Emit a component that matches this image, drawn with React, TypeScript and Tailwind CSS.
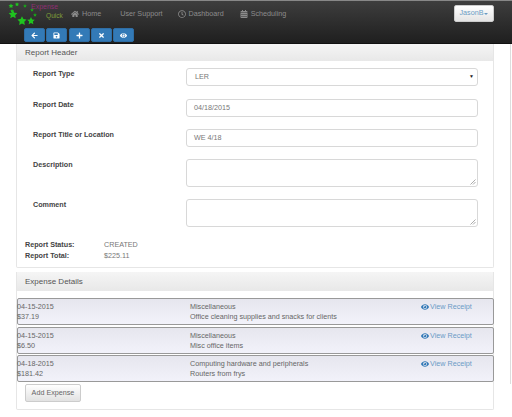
import React from "react";
import { FaHome, FaRegClock, FaCalendarAlt, FaArrowLeft, FaSave, FaPlus, FaTimes, FaEye } from "react-icons/fa";

function Star({ x, y, r, c = "#1fc41f" }: { x: number; y: number; r: number; c?: string }) {
  const pts: string[] = [];
  for (let i = 0; i < 10; i++) {
    const a = -Math.PI / 2 + (i * Math.PI) / 5;
    const q = i % 2 === 0 ? r : r * 0.5;
    pts.push(`${x + q * Math.cos(a)},${y + q * Math.sin(a)}`);
  }
  return <polygon points={pts.join(" ")} fill={c} />;
}

function Logo() {
  return (
    <div className="relative w-[56px] h-[26px] shrink-0">
      <svg width="31" height="25" viewBox="0 0 31 25" className="absolute left-0 top-[1px]">
        <Star x={3} y={4} r={2.6} />
        <Star x={9} y={2.5} r={2.2} />
        <Star x={17} y={4} r={2} c="#1aa51a" />
        <Star x={24} y={8} r={2} c="#1aa51a" />
        <Star x={27} y={13} r={2} c="#1aa51a" />
        <Star x={4} y={9} r={2} />
        <Star x={5} y={12.5} r={4.6} />
        <Star x={14} y={19} r={4.8} />
        <Star x={23} y={19} r={4} />
      </svg>
      <span className="absolute left-[23px] top-[1px] text-[7px] leading-[9px] text-[#8e2f73]">Expense</span>
      <span className="absolute left-[38px] top-[10px] text-[6.6px] leading-[9px] text-[#7f9f3a]">Quick</span>
    </div>
  );
}

function NavItem({ icon, label, className }: { icon?: React.ReactNode; label: string; className: string }) {
  return (
    <div className={`flex items-center gap-[3px] ${className}`}>
      {icon}
      <span>{label}</span>
    </div>
  );
}

function TopButton({ children }: { children: React.ReactNode }) {
  return (
    <div className="w-[21px] h-[14px] bg-[#337ab7] rounded-[2px] border border-[#2e6da4] flex items-center justify-center text-white text-[7px]">
      {children}
    </div>
  );
}

function PanelHead({ title, className }: { title: string; className: string }) {
  return (
    <div className={`bg-gradient-to-b from-[#f5f5f5] to-[#e8e8e8] pl-[8px] flex items-center text-[8px] text-[#555] ${className}`}>
      {title}
    </div>
  );
}

function FormRow({ label, h, mb, children }: { label: string; h: string; mb: string; children: React.ReactNode }) {
  return (
    <div className={`flex ${h} ${mb}`}>
      <div className="w-[169px] pl-[16px] pt-[1px] text-[7.2px] leading-[10px] font-bold text-[#444]">{label}</div>
      {children}
    </div>
  );
}

const field = "w-[292px] h-full border border-[#d8d8d8] rounded-[3px] bg-white pl-[7px] flex items-center text-[7.2px] text-[#777]";

function Resize() {
  return (
    <svg width="6" height="6" viewBox="0 0 6 6" className="self-end ml-auto mr-[1px] mb-[1px]">
      <path d="M0.5 5.5L5.5 0.5M3 5.5L5.5 3" stroke="#888" strokeWidth="0.7" />
    </svg>
  );
}

function ExpenseRow({ date, amount, cat, desc }: { date: string; amount: string; cat: string; desc: string }) {
  return (
    <div className="h-[27px] border border-[#999] rounded-[2px] bg-gradient-to-b from-[#e6e6ee] to-[#f2f2fa] flex text-[7.2px] leading-[10px] text-[#666] pt-[3px]">
      <div className="w-[172px] -ml-[1px] mr-[1px]">
        <div>{date}</div>
        <div>{amount}</div>
      </div>
      <div className="w-[231px]">
        <div>{cat}</div>
        <div>{desc}</div>
      </div>
      <div className="flex items-start gap-[1px] text-[#6a9ac6]">
        <FaEye className="text-[#337ab7] text-[8px] mt-[1px]" />
        <span>View Receipt</span>
      </div>
    </div>
  );
}

export default function App() {
  return (
    <div className="w-[512px] h-[417px] overflow-hidden bg-white font-['Liberation_Sans',Arial,sans-serif]">
      <header className="h-[44px] bg-gradient-to-b from-[#3e3e3e] to-[#1f1f1f] border-t border-t-[#888] border-b border-b-[#111]">
        <div className="h-[27px] flex items-start pl-[8px] pr-[18px] text-[7.2px] text-[#8c8c8c]">
          <Logo />
          <NavItem className="ml-[7px] mt-[8px]" icon={<FaHome className="text-[8px]" />} label="Home" />
          <NavItem className="ml-[19px] mt-[8px]" label="User Support" />
          <NavItem className="ml-[15px] mt-[8px]" icon={<FaRegClock className="text-[8px]" />} label="Dashboard" />
          <NavItem className="ml-[16px] mt-[8px]" icon={<FaCalendarAlt className="text-[8px]" />} label="Scheduling" />
          <div className="ml-auto mt-[4px] w-[40px] h-[17px] rounded-[2px] bg-gradient-to-b from-[#ffffff] to-[#e4e4e4] border border-[#ccc] flex items-center justify-center gap-[1px] text-[7.2px] text-[#6a9cc4]">
            JasonB
            <span className="w-0 h-0 border-x-[2px] border-x-transparent border-t-[2px] border-t-[#6a9cc4]" />
          </div>
        </div>
        <div className="flex gap-[1.25px] pl-[24px]">
          <TopButton><FaArrowLeft /></TopButton>
          <TopButton><FaSave /></TopButton>
          <TopButton><FaPlus /></TopButton>
          <TopButton><FaTimes /></TopButton>
          <TopButton><FaEye /></TopButton>
        </div>
      </header>

      <div className="relative">
        <div className="absolute left-[510px] top-0 w-[1px] h-[340px] bg-[#ddd]" />
        <main className="w-[478px] ml-[16px]">
          <section className="h-[224px] border-x border-b border-[#e6e6e6] rounded-b-[2px]">
            <PanelHead title="Report Header" className="h-[17px]" />
            <div className="pt-[7px]">
              <FormRow label="Report Type" h="h-[18px]" mb="mb-[13px]">
                <div className={`${field} justify-between pr-[3px]`}>
                  <span className="pl-[1px]">LER</span>
                  <span className="text-[5px] text-[#222]">▼</span>
                </div>
              </FormRow>
              <FormRow label="Report Date" h="h-[18px]" mb="mb-[12px]">
                <div className={field}>04/18/2015</div>
              </FormRow>
              <FormRow label="Report Title or Location" h="h-[18px]" mb="mb-[12px]">
                <div className={field}>WE 4/18</div>
              </FormRow>
              <FormRow label="Description" h="h-[28px]" mb="mb-[12px]">
                <div className={field}><Resize /></div>
              </FormRow>
              <FormRow label="Comment" h="h-[28px]" mb="mb-[12px]">
                <div className={field}><Resize /></div>
              </FormRow>
              <div className="grid grid-cols-[79px_1fr] pl-[8px] text-[7.2px] leading-[11px] text-[#777]">
                <div className="font-bold text-[#444]">Report Status:</div>
                <div>CREATED</div>
                <div className="font-bold text-[#444]">Report Total:</div>
                <div>$225.11</div>
              </div>
            </div>
          </section>

          <section className="mt-[4px] h-[138px] border-x border-b border-[#e6e6e6] rounded-b-[2px]">
            <PanelHead title="Expense Details" className="h-[19px]" />
            <div className="pt-[7px] flex flex-col gap-[1.7px] -mr-[1px]">
              <ExpenseRow date="04-15-2015" amount="$37.19" cat="Miscellaneous" desc="Office cleaning supplies and snacks for clients" />
              <ExpenseRow date="04-15-2015" amount="$6.50" cat="Miscellaneous" desc="Misc office items" />
              <ExpenseRow date="04-18-2015" amount="$181.42" cat="Computing hardware and peripherals" desc="Routers from frys" />
            </div>
            <div className="pl-[8px] pt-[2px]">
              <div className="w-[56px] h-[18px] border border-[#ccc] rounded-[2px] bg-gradient-to-b from-[#ffffff] to-[#e2e2e2] flex items-center justify-center text-[7.2px] text-[#666]">
                Add Expense
              </div>
            </div>
          </section>
        </main>
      </div>
    </div>
  );
}
